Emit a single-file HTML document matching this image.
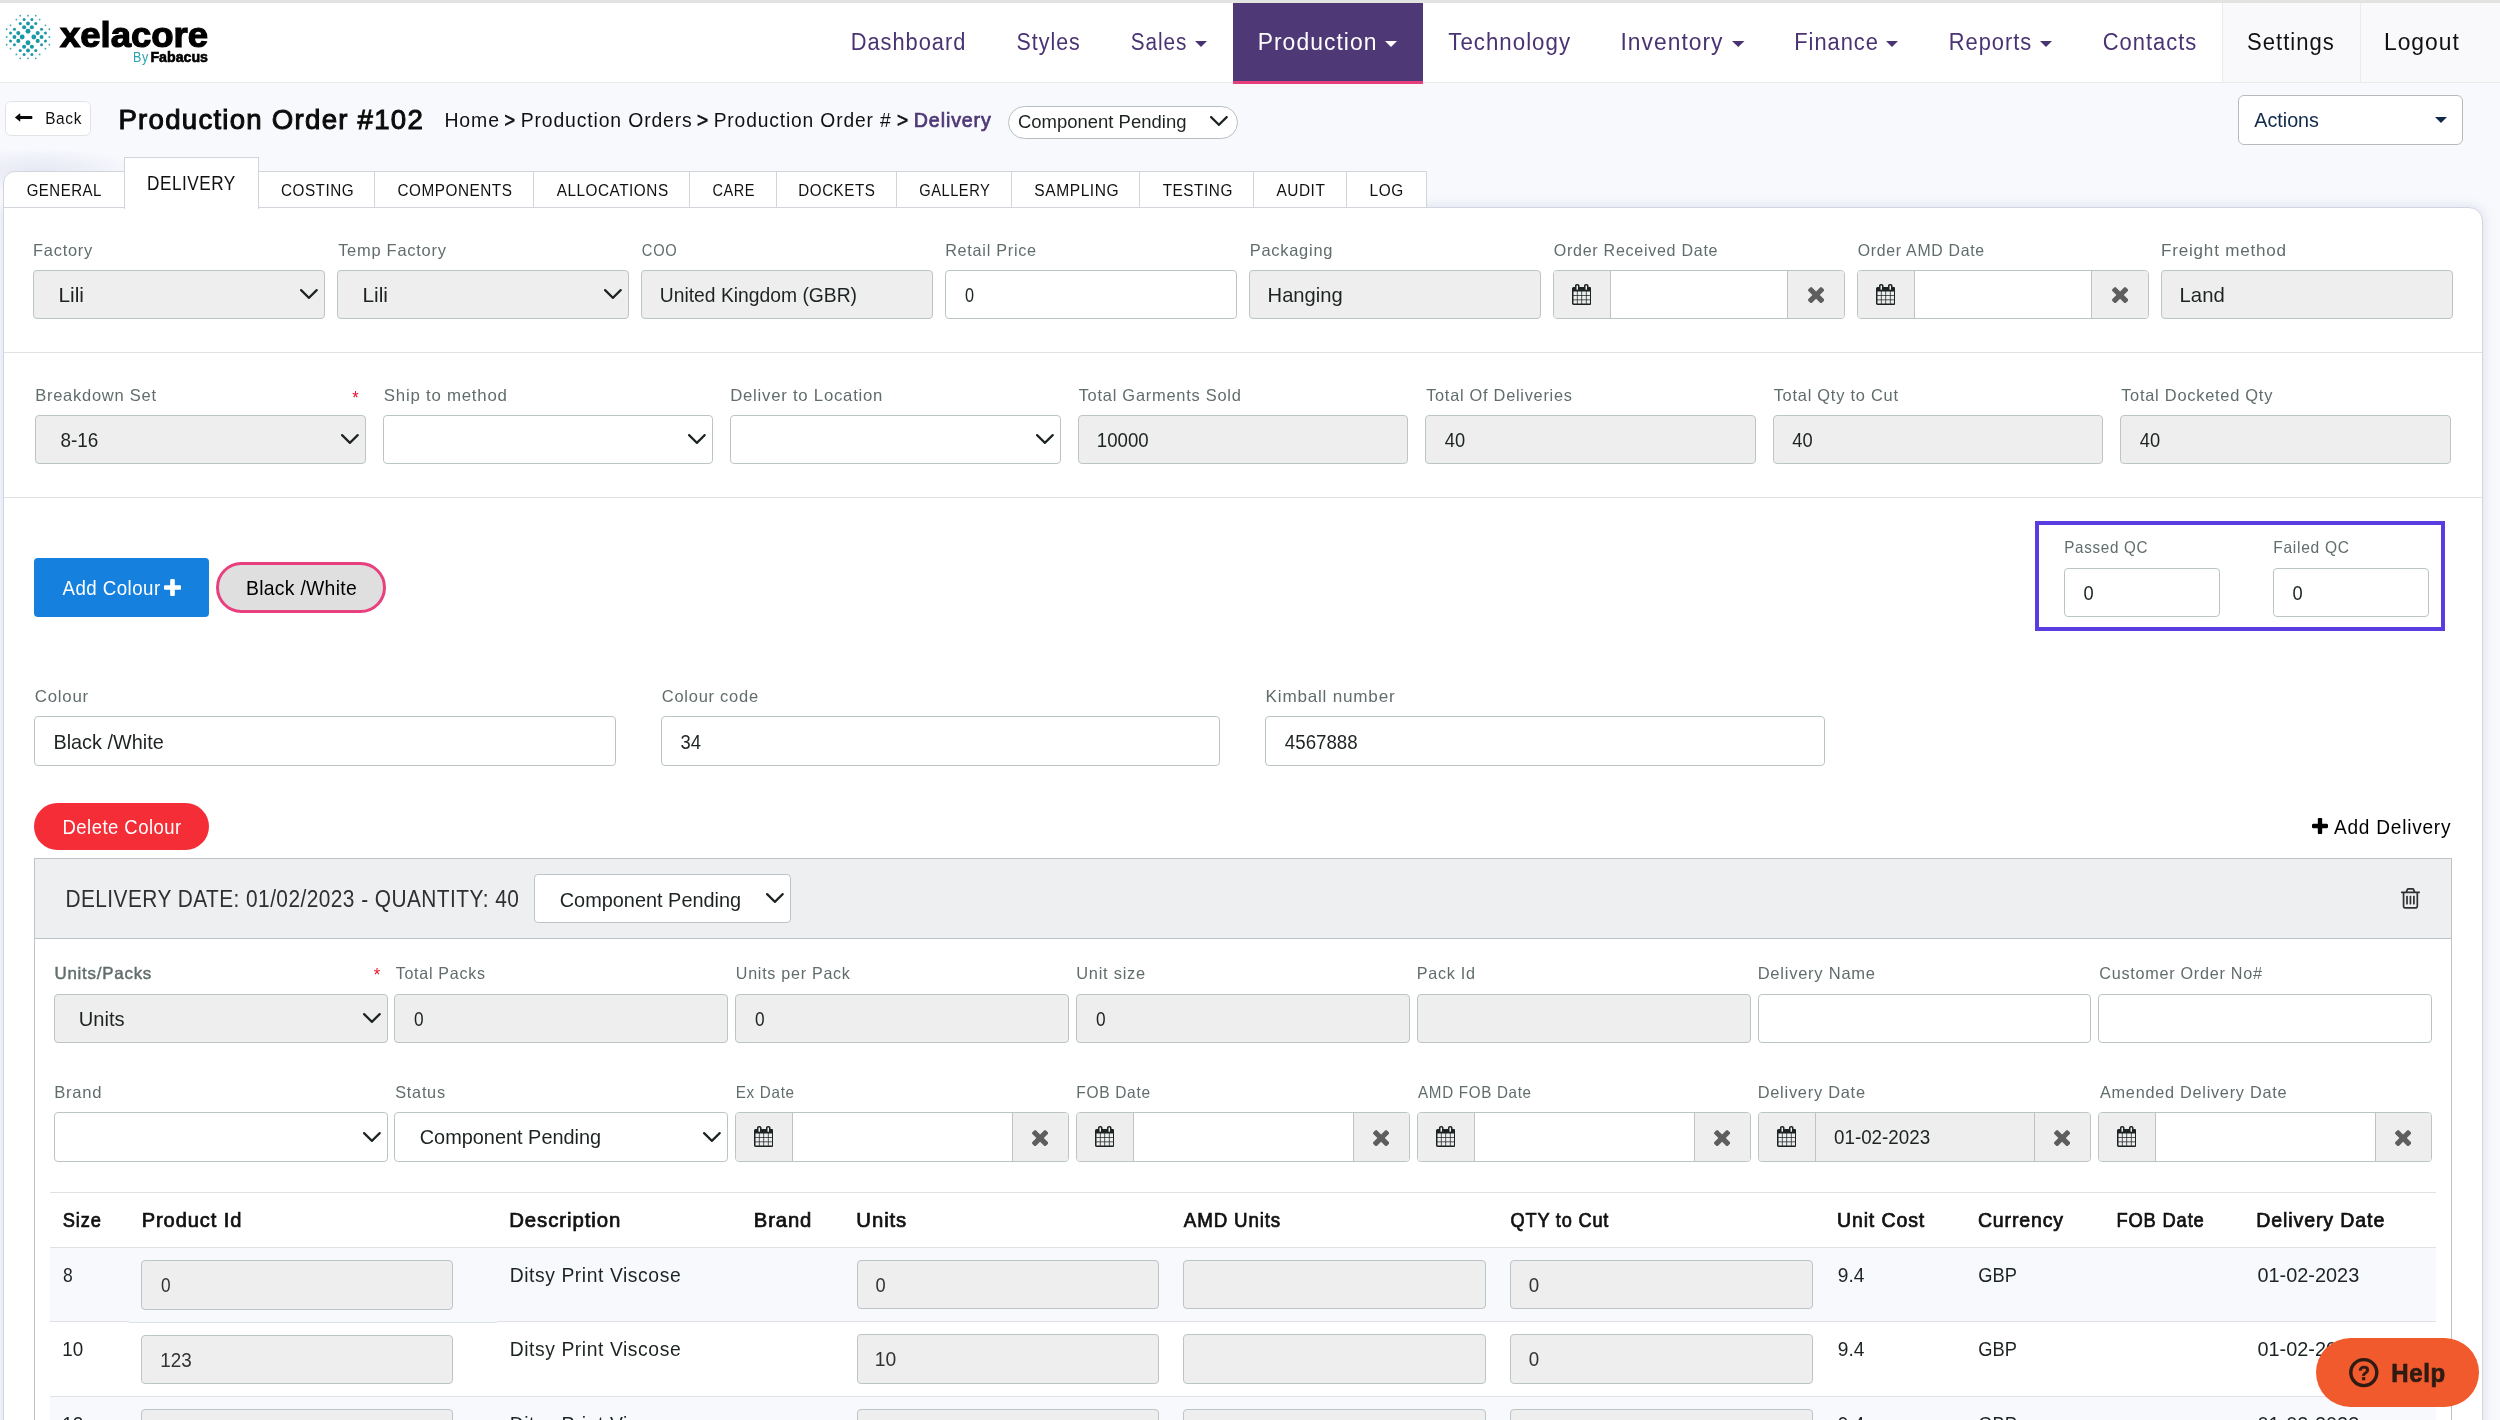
<!DOCTYPE html>
<html lang="en"><head><meta charset="utf-8"><title>Production Order #102 - Delivery</title>
<style>
html,body{margin:0;padding:0}
body{width:2500px;height:1420px;overflow:hidden;position:relative;background:#f8f9fd;font-family:"Liberation Sans",Arial,sans-serif;}
#app{position:absolute;left:0;top:0;width:2500px;height:1420px;will-change:transform}
.b{position:absolute;box-sizing:border-box;display:block}
.t{position:absolute;white-space:nowrap;line-height:1;display:block;transform-origin:0 0}
</style></head><body>
<div id="app">
<div class="b" style="left:0px;top:0px;width:2500px;height:3px;background:#e2e4e2;"></div>
<div class="b" style="left:0px;top:3px;width:2500px;height:79px;background:#fff;"></div>
<div class="b" style="left:0px;top:82px;width:2500px;height:1px;background:#ebebec;"></div>
<div class="b" style="left:2222px;top:3px;width:138px;height:79px;background:#f9f9fb;border-left:1px solid #ebebef;"></div>
<div class="b" style="left:2360px;top:3px;width:140px;height:79px;background:#f9f9fb;border-left:1px solid #ebebef;"></div>
<div class="b" style="left:1233px;top:3px;width:190px;height:81px;background:#4e3876;border-bottom:3px solid #e83e7c;box-sizing:border-box;"></div>
<span class="t" style="left:850px;top:31px;font-size:23.3px;letter-spacing:1.05px;transform:translateX(0.64px) scaleX(0.9374);color:#4a3373;">Dashboard</span>
<span class="t" style="left:1016px;top:31px;font-size:23.3px;letter-spacing:1.05px;transform:translateX(0.58px) scaleX(0.919);color:#4a3373;">Styles</span>
<span class="t" style="left:1130px;top:31px;font-size:23.3px;letter-spacing:1.05px;transform:translateX(0.86px) scaleX(0.8895);color:#4a3373;">Sales</span>
<span class="t" style="left:1257px;top:31px;font-size:23.3px;letter-spacing:1.05px;transform:translateX(0.66px) scaleX(0.9829);color:#fff;">Production</span>
<span class="t" style="left:1448px;top:31px;font-size:23.3px;letter-spacing:1.05px;transform:translateX(0.27px) scaleX(0.9563);color:#4a3373;">Technology</span>
<span class="t" style="left:1620px;top:31px;font-size:23.3px;letter-spacing:1.05px;transform:translateX(0.42px) scaleX(0.9796);color:#4a3373;">Inventory</span>
<span class="t" style="left:1794px;top:31px;font-size:23.3px;letter-spacing:1.05px;transform:translateX(0.24px) scaleX(0.938);color:#4a3373;">Finance</span>
<span class="t" style="left:1948px;top:31px;font-size:23.3px;letter-spacing:1.05px;transform:translateX(0.74px) scaleX(0.9386);color:#4a3373;">Reports</span>
<span class="t" style="left:2102px;top:31px;font-size:23.3px;letter-spacing:1.05px;transform:translateX(0.69px) scaleX(0.942);color:#4a3373;">Contacts</span>
<span class="t" style="left:2247px;top:31px;font-size:23.3px;letter-spacing:1.05px;transform:translateX(0.05px) scaleX(0.947);color:#111;">Settings</span>
<span class="t" style="left:2383px;top:31px;font-size:23.3px;letter-spacing:1.05px;transform:translateX(0.91px) scaleX(0.9794);color:#111;">Logout</span>
<svg class="b" style="left:1195px;top:40.8px" width="12" height="6.0" viewBox="0 0 12 6.0"><path d="M0 0H12L6.0 6.0Z" fill="#4a3373"/></svg>
<svg class="b" style="left:1385px;top:40.8px" width="12" height="6.0" viewBox="0 0 12 6.0"><path d="M0 0H12L6.0 6.0Z" fill="#fff"/></svg>
<svg class="b" style="left:1732px;top:40.8px" width="12.5" height="6.0" viewBox="0 0 12.5 6.0"><path d="M0 0H12.5L6.25 6.0Z" fill="#4a3373"/></svg>
<svg class="b" style="left:1886px;top:40.8px" width="12" height="6.0" viewBox="0 0 12 6.0"><path d="M0 0H12L6.0 6.0Z" fill="#4a3373"/></svg>
<svg class="b" style="left:2040px;top:40.8px" width="12" height="6.0" viewBox="0 0 12 6.0"><path d="M0 0H12L6.0 6.0Z" fill="#4a3373"/></svg>
<svg class="b" style="left:1.8000000000000007px;top:10.799999999999997px" width="52" height="52" viewBox="-26 -26 52 52"><g fill="#1b98a6"><circle cx="0.00" cy="-5.82" r="2.45"/><circle cx="0.00" cy="5.82" r="2.45"/><circle cx="-5.82" cy="0.00" r="2.45"/><circle cx="5.82" cy="0.00" r="2.45"/><circle cx="3.88" cy="-9.70" r="2.05"/><circle cx="3.88" cy="9.70" r="2.05"/><circle cx="-9.70" cy="3.88" r="2.05"/><circle cx="9.70" cy="3.88" r="2.05"/><circle cx="-3.88" cy="-9.70" r="2.05"/><circle cx="-3.88" cy="9.70" r="2.05"/><circle cx="-9.70" cy="-3.88" r="2.05"/><circle cx="9.70" cy="-3.88" r="2.05"/><circle cx="0.00" cy="-13.58" r="2.0"/><circle cx="0.00" cy="13.58" r="2.0"/><circle cx="-13.58" cy="0.00" r="2.0"/><circle cx="13.58" cy="0.00" r="2.0"/><circle cx="7.76" cy="-13.58" r="1.5"/><circle cx="7.76" cy="13.58" r="1.5"/><circle cx="-13.58" cy="7.76" r="1.5"/><circle cx="13.58" cy="7.76" r="1.5"/><circle cx="-7.76" cy="-13.58" r="1.5"/><circle cx="-7.76" cy="13.58" r="1.5"/><circle cx="-13.58" cy="-7.76" r="1.5"/><circle cx="13.58" cy="-7.76" r="1.5"/><circle cx="3.88" cy="-17.46" r="1.5"/><circle cx="3.88" cy="17.46" r="1.5"/><circle cx="-17.46" cy="3.88" r="1.5"/><circle cx="17.46" cy="3.88" r="1.5"/><circle cx="-3.88" cy="-17.46" r="1.5"/><circle cx="-3.88" cy="17.46" r="1.5"/><circle cx="-17.46" cy="-3.88" r="1.5"/><circle cx="17.46" cy="-3.88" r="1.5"/><circle cx="11.64" cy="-17.46" r="0.9" opacity=".85"/><circle cx="11.64" cy="17.46" r="0.9" opacity=".85"/><circle cx="-17.46" cy="11.64" r="0.9" opacity=".85"/><circle cx="17.46" cy="11.64" r="0.9" opacity=".85"/><circle cx="-11.64" cy="-17.46" r="0.9" opacity=".85"/><circle cx="-11.64" cy="17.46" r="0.9" opacity=".85"/><circle cx="-17.46" cy="-11.64" r="0.9" opacity=".85"/><circle cx="17.46" cy="-11.64" r="0.9" opacity=".85"/><circle cx="0.00" cy="-21.34" r="0.95" opacity=".85"/><circle cx="0.00" cy="21.34" r="0.95" opacity=".85"/><circle cx="-21.34" cy="0.00" r="0.95" opacity=".85"/><circle cx="21.34" cy="0.00" r="0.95" opacity=".85"/><circle cx="7.76" cy="-21.34" r="0.9" opacity=".85"/><circle cx="7.76" cy="21.34" r="0.9" opacity=".85"/><circle cx="-21.34" cy="7.76" r="0.9" opacity=".85"/><circle cx="21.34" cy="7.76" r="0.9" opacity=".85"/><circle cx="-7.76" cy="-21.34" r="0.9" opacity=".85"/><circle cx="-7.76" cy="21.34" r="0.9" opacity=".85"/><circle cx="-21.34" cy="-7.76" r="0.9" opacity=".85"/><circle cx="21.34" cy="-7.76" r="0.9" opacity=".85"/></g></svg>
<span class="t" style="left:59px;top:17px;font-size:35.2px;transform:translateX(0.9px) scaleX(1.0374);-webkit-text-stroke:1.2px #000;font-weight:700;">xelacore</span>
<span class="t" style="left:133px;top:50px;font-size:14.6px;letter-spacing:0.66px;transform:translateX(0.03px) scaleX(0.859);color:#2aa3b0;">By</span>
<span class="t" style="left:150px;top:50px;font-size:14.6px;transform:translateX(0.45px) scaleX(0.9713);-webkit-text-stroke:0.6px #000;font-weight:700;">Fabacus</span>
<div class="b" style="left:5px;top:101px;width:86px;height:35px;background:#fff;border:1px solid #e2e3e8;border-radius:6px;"></div>
<svg class="b" style="left:14px;top:112px" width="20" height="11" viewBox="14 112 20 11"><path d="M14.9 117.45L19.6 113.6Q20.3 113.2 20.3 114V115.9H31.5Q32.4 115.9 32.4 116.8V118.1Q32.4 119 31.5 119H20.3V120.9Q20.3 121.7 19.6 121.3Z" fill="#0a0a0a"/></svg>
<span class="t" style="left:45px;top:110px;font-size:17.1px;letter-spacing:0.77px;transform:translateX(0.16px) scaleX(0.8994);color:#111;">Back</span>
<span class="t" style="left:118px;top:106px;font-size:27.6px;letter-spacing:1.24px;transform:translateX(0.44px) scaleX(1.0013);-webkit-text-stroke:0.99px #0b0b0b;color:#0b0b0b;">Production Order #102</span>
<span class="t" style="left:444px;top:110px;font-size:20.3px;letter-spacing:0.91px;transform:translateX(0.44px) scaleX(0.9594);color:#111;">Home</span>
<span class="t" style="left:504px;top:110px;font-size:20.3px;letter-spacing:0.91px;transform:translateX(0.48px) scaleX(0.8881);-webkit-text-stroke:0.73px #111;color:#111;">&gt;</span>
<span class="t" style="left:520px;top:110px;font-size:20.3px;letter-spacing:0.91px;transform:translateX(0.65px) scaleX(0.9551);color:#111;">Production Orders</span>
<span class="t" style="left:696px;top:110px;font-size:20.3px;letter-spacing:0.91px;transform:translateX(0.93px) scaleX(0.9387);-webkit-text-stroke:0.73px #111;color:#111;">&gt;</span>
<span class="t" style="left:713px;top:110px;font-size:20.3px;letter-spacing:0.91px;transform:translateX(0.66px) scaleX(0.9474);color:#111;">Production Order #</span>
<span class="t" style="left:896px;top:110px;font-size:20.3px;letter-spacing:0.91px;transform:translateX(0.93px) scaleX(0.9387);-webkit-text-stroke:0.73px #111;color:#111;">&gt;</span>
<span class="t" style="left:913px;top:110px;font-size:20.3px;letter-spacing:0.91px;transform:translateX(0.79px) scaleX(0.9678);-webkit-text-stroke:0.73px #4e3876;color:#4e3876;">Delivery</span>
<div class="b" style="left:1008px;top:106px;width:230px;height:33px;background:#fff;border:1px solid #b6bfc0;border-radius:17px;"></div>
<span class="t" style="left:1017px;top:113px;font-size:18.9px;transform:translateX(0.94px) scaleX(0.9783);color:#1d2323;">Component Pending</span>
<svg class="b" style="left:1209.9px;top:116.1px" width="17.799999999999955" height="10.0" viewBox="0 0 17.799999999999955 10.0"><path d="M1.10 1.10L8.90 8.79L16.70 1.10" fill="none" stroke="#1d2323" stroke-width="2.2" stroke-linecap="round" stroke-linejoin="miter"/></svg>
<div class="b" style="left:2238px;top:95px;width:225px;height:50px;background:#fff;border:1px solid #b9b9b9;border-radius:6px;"></div>
<span class="t" style="left:2254px;top:110px;font-size:20.3px;transform:translateX(0.2px) scaleX(0.974);color:#10294b;">Actions</span>
<svg class="b" style="left:2435px;top:117px" width="12" height="6" viewBox="0 0 12 6"><path d="M0 0H12L6.0 6Z" fill="#10294b"/></svg>
<div class="b" style="left:-30px;top:140px;width:190px;height:90px;background:radial-gradient(ellipse 100px 24px at 70px 32px,rgba(150,160,205,.2),rgba(150,160,205,0) 100%)"></div>
<div class="b" style="left:3px;top:207px;width:2480px;height:1293px;background:#fff;border:1px solid #d3d5dc;border-radius:0 14px 0 0;box-shadow:0 0 12px rgba(110,120,180,.22);"></div>
<div class="b" style="left:3px;top:171px;width:122px;height:37px;background:#fff;border:1px solid #d2d4db;border-radius:12px 0 0 0;"></div>
<span class="t" style="left:26px;top:182px;font-size:17.4px;letter-spacing:0.6px;transform:translateX(0.65px) scaleX(0.8626);color:#111;">GENERAL</span>
<div class="b" style="left:124px;top:157px;width:135px;height:52px;background:#fff;border:1px solid #d2d4db;border-bottom:none;"></div>
<span class="t" style="left:147px;top:173px;font-size:20.3px;letter-spacing:0.6px;transform:translateX(0.02px) scaleX(0.8474);color:#111;">DELIVERY</span>
<div class="b" style="left:258px;top:171px;width:117px;height:37px;background:#fff;border:1px solid #d2d4db;"></div>
<span class="t" style="left:280px;top:182px;font-size:17.4px;letter-spacing:0.6px;transform:translateX(0.98px) scaleX(0.8767);color:#111;">COSTING</span>
<div class="b" style="left:374px;top:171px;width:160px;height:37px;background:#fff;border:1px solid #d2d4db;"></div>
<span class="t" style="left:397px;top:182px;font-size:17.4px;letter-spacing:0.6px;transform:translateX(0.48px) scaleX(0.8794);color:#111;">COMPONENTS</span>
<div class="b" style="left:533px;top:171px;width:157px;height:37px;background:#fff;border:1px solid #d2d4db;"></div>
<span class="t" style="left:556px;top:182px;font-size:17.4px;letter-spacing:0.6px;transform:translateX(0.75px) scaleX(0.8804);color:#111;">ALLOCATIONS</span>
<div class="b" style="left:689px;top:171px;width:88px;height:37px;background:#fff;border:1px solid #d2d4db;"></div>
<span class="t" style="left:712px;top:182px;font-size:17.4px;letter-spacing:0.6px;transform:translateX(0.52px) scaleX(0.8345);color:#111;">CARE</span>
<div class="b" style="left:776px;top:171px;width:121px;height:37px;background:#fff;border:1px solid #d2d4db;"></div>
<span class="t" style="left:798px;top:182px;font-size:17.4px;letter-spacing:0.6px;transform:translateX(0.3px) scaleX(0.8733);color:#111;">DOCKETS</span>
<div class="b" style="left:896px;top:171px;width:116px;height:37px;background:#fff;border:1px solid #d2d4db;"></div>
<span class="t" style="left:919px;top:182px;font-size:17.4px;letter-spacing:0.6px;transform:translateX(0.26px) scaleX(0.8443);color:#111;">GALLERY</span>
<div class="b" style="left:1011px;top:171px;width:129px;height:37px;background:#fff;border:1px solid #d2d4db;"></div>
<span class="t" style="left:1034px;top:182px;font-size:17.4px;letter-spacing:0.6px;transform:translateX(0.33px) scaleX(0.8959);color:#111;">SAMPLING</span>
<div class="b" style="left:1139px;top:171px;width:115px;height:37px;background:#fff;border:1px solid #d2d4db;"></div>
<span class="t" style="left:1162px;top:182px;font-size:17.4px;letter-spacing:0.6px;transform:translateX(0.67px) scaleX(0.8825);color:#111;">TESTING</span>
<div class="b" style="left:1253px;top:171px;width:94px;height:37px;background:#fff;border:1px solid #d2d4db;"></div>
<span class="t" style="left:1276px;top:182px;font-size:17.4px;letter-spacing:0.6px;transform:translateX(0.5px) scaleX(0.8853);color:#111;">AUDIT</span>
<div class="b" style="left:1346px;top:171px;width:81px;height:37px;background:#fff;border:1px solid #d2d4db;"></div>
<span class="t" style="left:1369px;top:182px;font-size:17.4px;letter-spacing:0.6px;transform:translateX(0.53px) scaleX(0.8857);color:#111;">LOG</span>
<span class="t" style="left:33px;top:243px;font-size:16.92px;letter-spacing:0.76px;transform:translateX(0.07px) scaleX(0.9709);color:#616d6c;">Factory</span>
<span class="t" style="left:338px;top:243px;font-size:16.92px;letter-spacing:0.76px;transform:translateX(0.14px) scaleX(0.9728);color:#616d6c;">Temp Factory</span>
<span class="t" style="left:641px;top:243px;font-size:16.92px;letter-spacing:0.76px;transform:translateX(0.85px) scaleX(0.8696);color:#616d6c;">COO</span>
<span class="t" style="left:945px;top:243px;font-size:16.92px;letter-spacing:0.76px;transform:translateX(0.18px) scaleX(0.9587);color:#616d6c;">Retail Price</span>
<span class="t" style="left:1249px;top:243px;font-size:16.92px;letter-spacing:0.76px;transform:translateX(0.66px) scaleX(0.9736);color:#616d6c;">Packaging</span>
<span class="t" style="left:1553px;top:243px;font-size:16.92px;letter-spacing:0.76px;transform:translateX(0.79px) scaleX(0.9492);color:#616d6c;">Order Received Date</span>
<span class="t" style="left:1857px;top:243px;font-size:16.92px;letter-spacing:0.76px;transform:translateX(0.8px) scaleX(0.9371);color:#616d6c;">Order AMD Date</span>
<span class="t" style="left:2161px;top:243px;font-size:16.92px;letter-spacing:0.76px;transform:translateX(0.11px) scaleX(1.0102);color:#616d6c;">Freight method</span>
<div class="b" style="left:33px;top:270px;width:292px;height:49px;background:#eeeeee;border:1px solid #bcc5c6;border-radius:4px;"></div>
<div class="b" style="left:337px;top:270px;width:292px;height:49px;background:#eeeeee;border:1px solid #bcc5c6;border-radius:4px;"></div>
<div class="b" style="left:641px;top:270px;width:292px;height:49px;background:#eeeeee;border:1px solid #bcc5c6;border-radius:4px;"></div>
<div class="b" style="left:945px;top:270px;width:292px;height:49px;background:#fff;border:1px solid #bcc5c6;border-radius:4px;"></div>
<div class="b" style="left:1249px;top:270px;width:292px;height:49px;background:#eeeeee;border:1px solid #bcc5c6;border-radius:4px;"></div>
<div class="b" style="left:1553px;top:270px;width:292px;height:49px;background:#fff;border:1px solid #bcc5c6;border-radius:4px;"></div>
<div class="b" style="left:1554px;top:271px;width:56.5px;height:47px;background:#eeeeee;border-right:1px solid #bcc5c6;border-radius:3px 0 0 3px;"></div>
<div class="b" style="left:1787px;top:271px;width:57px;height:47px;background:#eeeeee;border-left:1px solid #bcc5c6;border-radius:0 3px 3px 0;"></div>
<svg class="b" style="left:1571.6px;top:284.2px" width="19.5" height="21" viewBox="0 -1536 1664 1792" preserveAspectRatio="none"><path transform="scale(1,-1)" fill="#1d2323" d="M128 -128h288v288h-288v-288zM480 -128h320v288h-320v-288zM128 224h288v320h-288v-320zM480 224h320v320h-320v-320zM128 608h288v288h-288v-288zM864 -128h320v288h-320v-288zM480 608h320v288h-320v-288zM1248 -128h288v288h-288v-288zM864 224h320v320h-320v-320zM512 1088v288q0 13 -9.5 22.5t-22.5 9.5h-64q-13 0 -22.5 -9.5t-9.5 -22.5v-288q0 -13 9.5 -22.5t22.5 -9.5h64q13 0 22.5 9.5t9.5 22.5zM1248 224h288v320h-288v-320zM864 608h320v288h-320v-288zM1248 608h288v288h-288v-288zM1280 1088v288q0 13 -9.5 22.5t-22.5 9.5h-64q-13 0 -22.5 -9.5t-9.5 -22.5v-288q0 -13 9.5 -22.5t22.5 -9.5h64q13 0 22.5 9.5t9.5 22.5zM1664 1152v-1280q0 -52 -38 -90t-90 -38h-1408q-52 0 -90 38t-38 90v1280q0 52 38 90t90 38h128v96q0 66 47 113t113 47h64q66 0 113 -47t47 -113v-96h384v96q0 66 47 113t113 47h64q66 0 113 -47t47 -113v-96h128q52 0 90 -38t38 -90z"/></svg>
<svg class="b" style="left:1807.9px;top:287.2px" width="16.2" height="16.2" viewBox="110 -1170 1188 1188" preserveAspectRatio="none"><path transform="scale(1,-1)" fill="#5e5e5e" d="M1298 214q0 -40 -28 -68l-136 -136q-28 -28 -68 -28t-68 28l-294 294l-294 -294q-28 -28 -68 -28t-68 28l-136 136q-28 28 -28 68t28 68l294 294l-294 294q-28 28 -28 68t28 68l136 136q28 28 68 28t68 -28l294 -294l294 294q28 28 68 28t68 -28l136 -136q28 -28 28 -68t-28 -68l-294 -294l294 -294q28 -28 28 -68z"/></svg>
<div class="b" style="left:1857px;top:270px;width:292px;height:49px;background:#fff;border:1px solid #bcc5c6;border-radius:4px;"></div>
<div class="b" style="left:1858px;top:271px;width:56.5px;height:47px;background:#eeeeee;border-right:1px solid #bcc5c6;border-radius:3px 0 0 3px;"></div>
<div class="b" style="left:2091px;top:271px;width:57px;height:47px;background:#eeeeee;border-left:1px solid #bcc5c6;border-radius:0 3px 3px 0;"></div>
<svg class="b" style="left:1875.6px;top:284.2px" width="19.5" height="21" viewBox="0 -1536 1664 1792" preserveAspectRatio="none"><path transform="scale(1,-1)" fill="#1d2323" d="M128 -128h288v288h-288v-288zM480 -128h320v288h-320v-288zM128 224h288v320h-288v-320zM480 224h320v320h-320v-320zM128 608h288v288h-288v-288zM864 -128h320v288h-320v-288zM480 608h320v288h-320v-288zM1248 -128h288v288h-288v-288zM864 224h320v320h-320v-320zM512 1088v288q0 13 -9.5 22.5t-22.5 9.5h-64q-13 0 -22.5 -9.5t-9.5 -22.5v-288q0 -13 9.5 -22.5t22.5 -9.5h64q13 0 22.5 9.5t9.5 22.5zM1248 224h288v320h-288v-320zM864 608h320v288h-320v-288zM1248 608h288v288h-288v-288zM1280 1088v288q0 13 -9.5 22.5t-22.5 9.5h-64q-13 0 -22.5 -9.5t-9.5 -22.5v-288q0 -13 9.5 -22.5t22.5 -9.5h64q13 0 22.5 9.5t9.5 22.5zM1664 1152v-1280q0 -52 -38 -90t-90 -38h-1408q-52 0 -90 38t-38 90v1280q0 52 38 90t90 38h128v96q0 66 47 113t113 47h64q66 0 113 -47t47 -113v-96h384v96q0 66 47 113t113 47h64q66 0 113 -47t47 -113v-96h128q52 0 90 -38t38 -90z"/></svg>
<svg class="b" style="left:2111.9px;top:287.2px" width="16.2" height="16.2" viewBox="110 -1170 1188 1188" preserveAspectRatio="none"><path transform="scale(1,-1)" fill="#5e5e5e" d="M1298 214q0 -40 -28 -68l-136 -136q-28 -28 -68 -28t-68 28l-294 294l-294 -294q-28 -28 -68 -28t-68 28l-136 136q-28 28 -28 68t28 68l294 294l-294 294q-28 28 -28 68t28 68l136 136q28 28 68 28t68 -28l294 -294l294 294q28 28 68 28t68 -28l136 -136q28 -28 28 -68t-28 -68l-294 -294l294 -294q28 -28 28 -68z"/></svg>
<div class="b" style="left:2161px;top:270px;width:292px;height:49px;background:#eeeeee;border:1px solid #bcc5c6;border-radius:4px;"></div>
<svg class="b" style="left:300px;top:289.4px" width="17.80000000000001" height="10.100000000000023" viewBox="0 0 17.80000000000001 10.100000000000023"><path d="M1.10 1.10L8.90 8.89L16.70 1.10" fill="none" stroke="#1d2323" stroke-width="2.2" stroke-linecap="round" stroke-linejoin="miter"/></svg>
<svg class="b" style="left:604px;top:289.4px" width="17.799999999999955" height="10.100000000000023" viewBox="0 0 17.799999999999955 10.100000000000023"><path d="M1.10 1.10L8.90 8.89L16.70 1.10" fill="none" stroke="#1d2323" stroke-width="2.2" stroke-linecap="round" stroke-linejoin="miter"/></svg>
<span class="t" style="left:58px;top:285px;font-size:20.3px;transform:translateX(0.43px) scaleX(1.0305);color:#1d2323;">Lili</span>
<span class="t" style="left:362px;top:285px;font-size:20.3px;transform:translateX(0.43px) scaleX(1.0305);color:#1d2323;">Lili</span>
<span class="t" style="left:659px;top:285px;font-size:20.3px;transform:translateX(0.77px) scaleX(0.9512);color:#1d2323;">United Kingdom (GBR)</span>
<span class="t" style="left:965px;top:285px;font-size:20.3px;transform:translateX(0.1px) scaleX(0.8);color:#1d2323;">0</span>
<span class="t" style="left:1267px;top:285px;font-size:20.3px;transform:translateX(0.58px) scaleX(0.9946);color:#1d2323;">Hanging</span>
<span class="t" style="left:2179px;top:285px;font-size:20.3px;transform:translateX(0.57px) scaleX(1.0014);color:#1d2323;">Land</span>
<div class="b" style="left:4px;top:352px;width:2478px;height:1px;background:#dfe2e5;"></div>
<span class="t" style="left:35px;top:388px;font-size:16.92px;letter-spacing:0.76px;transform:translateX(0.16px) scaleX(0.9762);color:#616d6c;">Breakdown Set</span>
<span class="t" style="left:383px;top:388px;font-size:16.92px;letter-spacing:0.76px;transform:translateX(0.75px) scaleX(0.9967);color:#616d6c;">Ship to method</span>
<span class="t" style="left:730px;top:388px;font-size:16.92px;letter-spacing:0.76px;transform:translateX(0.14px) scaleX(0.9907);color:#616d6c;">Deliver to Location</span>
<span class="t" style="left:1078px;top:388px;font-size:16.92px;letter-spacing:0.76px;transform:translateX(0.64px) scaleX(0.9725);color:#616d6c;">Total Garments Sold</span>
<span class="t" style="left:1426px;top:388px;font-size:16.92px;letter-spacing:0.76px;transform:translateX(0.14px) scaleX(0.9666);color:#616d6c;">Total Of Deliveries</span>
<span class="t" style="left:1773px;top:388px;font-size:16.92px;letter-spacing:0.76px;transform:translateX(0.64px) scaleX(0.9721);color:#616d6c;">Total Qty to Cut</span>
<span class="t" style="left:2121px;top:388px;font-size:16.92px;letter-spacing:0.76px;transform:translateX(0.14px) scaleX(0.9709);color:#616d6c;">Total Docketed Qty</span>
<span class="t" style="left:352px;top:389px;font-size:18px;letter-spacing:0.81px;transform:translateX(0.27px) scaleX(0.9231);color:#e8112d;">*</span>
<div class="b" style="left:35px;top:415px;width:331px;height:49px;background:#eeeeee;border:1px solid #bcc5c6;border-radius:4px;"></div>
<svg class="b" style="left:341px;top:434.4px" width="17.80000000000001" height="10.100000000000023" viewBox="0 0 17.80000000000001 10.100000000000023"><path d="M1.10 1.10L8.90 8.89L16.70 1.10" fill="none" stroke="#1d2323" stroke-width="2.2" stroke-linecap="round" stroke-linejoin="miter"/></svg>
<div class="b" style="left:383px;top:415px;width:330px;height:49px;background:#fff;border:1px solid #bcc5c6;border-radius:4px;"></div>
<svg class="b" style="left:688px;top:434.4px" width="17.799999999999955" height="10.100000000000023" viewBox="0 0 17.799999999999955 10.100000000000023"><path d="M1.10 1.10L8.90 8.89L16.70 1.10" fill="none" stroke="#1d2323" stroke-width="2.2" stroke-linecap="round" stroke-linejoin="miter"/></svg>
<div class="b" style="left:730px;top:415px;width:331px;height:49px;background:#fff;border:1px solid #bcc5c6;border-radius:4px;"></div>
<svg class="b" style="left:1036px;top:434.4px" width="17.799999999999955" height="10.100000000000023" viewBox="0 0 17.799999999999955 10.100000000000023"><path d="M1.10 1.10L8.90 8.89L16.70 1.10" fill="none" stroke="#1d2323" stroke-width="2.2" stroke-linecap="round" stroke-linejoin="miter"/></svg>
<div class="b" style="left:1078px;top:415px;width:330px;height:49px;background:#eeeeee;border:1px solid #bcc5c6;border-radius:4px;"></div>
<div class="b" style="left:1425px;top:415px;width:331px;height:49px;background:#eeeeee;border:1px solid #bcc5c6;border-radius:4px;"></div>
<div class="b" style="left:1773px;top:415px;width:330px;height:49px;background:#eeeeee;border:1px solid #bcc5c6;border-radius:4px;"></div>
<div class="b" style="left:2120px;top:415px;width:331px;height:49px;background:#eeeeee;border:1px solid #bcc5c6;border-radius:4px;"></div>
<span class="t" style="left:60px;top:430px;font-size:20.3px;transform:translateX(0.38px) scaleX(0.9317);color:#1d2323;">8-16</span>
<span class="t" style="left:1096px;top:430px;font-size:20.3px;transform:translateX(0.82px) scaleX(0.9196);color:#1d2323;">10000</span>
<span class="t" style="left:1444px;top:430px;font-size:20.3px;transform:translateX(0.86px) scaleX(0.9013);color:#1d2323;">40</span>
<span class="t" style="left:1792px;top:430px;font-size:20.3px;transform:translateX(0.36px) scaleX(0.9013);color:#1d2323;">40</span>
<span class="t" style="left:2139px;top:430px;font-size:20.3px;transform:translateX(0.86px) scaleX(0.9013);color:#1d2323;">40</span>
<div class="b" style="left:4px;top:497px;width:2478px;height:1px;background:#dfe2e5;"></div>
<div class="b" style="left:2035px;top:521px;width:410px;height:110px;border:4px solid #5b3ce0;"></div>
<span class="t" style="left:2064px;top:540px;font-size:16.92px;letter-spacing:0.76px;transform:translateX(0.26px) scaleX(0.8993);color:#616d6c;">Passed QC</span>
<span class="t" style="left:2273px;top:540px;font-size:16.92px;letter-spacing:0.76px;transform:translateX(0.23px) scaleX(0.9218);color:#616d6c;">Failed QC</span>
<div class="b" style="left:2064px;top:568px;width:156px;height:49px;background:#fff;border:1px solid #bcc5c6;border-radius:4px;"></div>
<div class="b" style="left:2273px;top:568px;width:156px;height:49px;background:#fff;border:1px solid #bcc5c6;border-radius:4px;"></div>
<span class="t" style="left:2083px;top:583px;font-size:20.3px;transform:translateX(0.52px) scaleX(0.9026);color:#1d2323;">0</span>
<span class="t" style="left:2292px;top:583px;font-size:20.3px;transform:translateX(0.52px) scaleX(0.9026);color:#1d2323;">0</span>
<div class="b" style="left:34px;top:558px;width:175px;height:59px;background:#1580de;border-radius:4px;"></div>
<span class="t" style="left:62px;top:578px;font-size:20.3px;letter-spacing:0.5px;transform:translateX(0.5px) scaleX(0.9217);color:#fff;">Add Colour</span>
<svg class="b" style="left:164px;top:578.5px" width="17" height="17" viewBox="0 -1408 1408 1408" preserveAspectRatio="none"><path transform="scale(1,-1)" fill="#fff" d="M1408 800v-192q0 -40 -28 -68t-68 -28h-416v-416q0 -40 -28 -68t-68 -28h-192q-40 0 -68 28t-28 68v416h-416q-40 0 -68 28t-28 68v192q0 40 28 68t68 28h416v416q0 40 28 68t68 28h192q40 0 68 -28t28 -68v-416h416q40 0 68 -28t28 -68z"/></svg>
<div class="b" style="left:216px;top:562px;width:170px;height:51px;background:#dfdfdf;border:3px solid #e8407f;border-radius:26px;"></div>
<span class="t" style="left:245px;top:578px;font-size:20.3px;letter-spacing:0.3px;transform:translateX(0.95px) scaleX(0.9544);">Black /White</span>
<span class="t" style="left:34px;top:689px;font-size:16.92px;letter-spacing:0.76px;transform:translateX(0.75px) scaleX(0.9975);color:#616d6c;">Colour</span>
<span class="t" style="left:661px;top:689px;font-size:16.92px;letter-spacing:0.76px;transform:translateX(0.77px) scaleX(0.9751);color:#616d6c;">Colour code</span>
<span class="t" style="left:1265px;top:689px;font-size:16.92px;letter-spacing:0.76px;transform:translateX(0.61px) scaleX(1.0136);color:#616d6c;">Kimball number</span>
<div class="b" style="left:34px;top:716px;width:582px;height:50px;background:#fff;border:1px solid #bcc5c6;border-radius:4px;"></div>
<div class="b" style="left:661px;top:716px;width:559px;height:50px;background:#fff;border:1px solid #bcc5c6;border-radius:4px;"></div>
<div class="b" style="left:1265px;top:716px;width:560px;height:50px;background:#fff;border:1px solid #bcc5c6;border-radius:4px;"></div>
<span class="t" style="left:53px;top:732px;font-size:20.3px;transform:translateX(0.41px) scaleX(0.9784);color:#1d2323;">Black /White</span>
<span class="t" style="left:680px;top:732px;font-size:20.3px;transform:translateX(0.52px) scaleX(0.9066);color:#1d2323;">34</span>
<span class="t" style="left:1284px;top:732px;font-size:20.3px;transform:translateX(0.85px) scaleX(0.9222);color:#1d2323;">4567888</span>
<div class="b" style="left:34px;top:803px;width:175px;height:47px;background:#f52d37;border-radius:24px;"></div>
<span class="t" style="left:62px;top:817px;font-size:20.3px;letter-spacing:0.5px;transform:translateX(0.52px) scaleX(0.9125);color:#fff;">Delete Colour</span>
<svg class="b" style="left:2312px;top:818px" width="16" height="16" viewBox="0 -1408 1408 1408" preserveAspectRatio="none"><path transform="scale(1,-1)" fill="#000" d="M1408 800v-192q0 -40 -28 -68t-68 -28h-416v-416q0 -40 -28 -68t-68 -28h-192q-40 0 -68 28t-28 68v416h-416q-40 0 -68 28t-28 68v192q0 40 28 68t68 28h416v416q0 40 28 68t68 28h192q40 0 68 -28t28 -68v-416h416q40 0 68 -28t28 -68z"/></svg>
<span class="t" style="left:2334px;top:817px;font-size:20.3px;letter-spacing:0.8px;transform:scaleX(0.9407);">Add Delivery</span>
<div class="b" style="left:34px;top:858px;width:2418px;height:642px;background:#fff;border:1px solid #bcc4c6;"></div>
<div class="b" style="left:35px;top:859px;width:2416px;height:80px;background:#eeeff1;border-bottom:1px solid #bcc4c6;"></div>
<span class="t" style="left:65px;top:888px;font-size:23.3px;letter-spacing:0.5px;transform:translateX(0.42px) scaleX(0.8954);color:#2f2f2f;">DELIVERY DATE: 01/02/2023 - QUANTITY: 40</span>
<div class="b" style="left:534px;top:874px;width:257px;height:49px;background:#fff;border:1px solid #bcc5c6;border-radius:4px;"></div>
<span class="t" style="left:559px;top:890px;font-size:20.3px;transform:translateX(0.72px) scaleX(0.981);color:#1d2323;">Component Pending</span>
<svg class="b" style="left:766px;top:893.4px" width="17.799999999999955" height="10.100000000000023" viewBox="0 0 17.799999999999955 10.100000000000023"><path d="M1.10 1.10L8.90 8.89L16.70 1.10" fill="none" stroke="#1d2323" stroke-width="2.2" stroke-linecap="round" stroke-linejoin="miter"/></svg>
<svg class="b" style="left:2401.1px;top:887.9px" width="18.9" height="20.8" viewBox="0 -1408 1408 1536" preserveAspectRatio="none"><path transform="scale(1,-1)" fill="#303030" d="M512 800v-576q0 -14 -9 -23t-23 -9h-64q-14 0 -23 9t-9 23v576q0 14 9 23t23 9h64q14 0 23 -9t9 -23zM768 800v-576q0 -14 -9 -23t-23 -9h-64q-14 0 -23 9t-9 23v576q0 14 9 23t23 9h64q14 0 23 -9t9 -23zM1024 800v-576q0 -14 -9 -23t-23 -9h-64q-14 0 -23 9t-9 23v576q0 14 9 23t23 9h64q14 0 23 -9t9 -23zM1152 76v948h-896v-948q0 -22 7 -40.5t14.5 -27t10.5 -8.5h832q3 0 10.5 8.5t14.5 27t7 40.5zM480 1152h448l-48 117q-7 9 -17 11h-317q-10 -2 -17 -11zM1408 1120v-64q0 -14 -9 -23t-23 -9h-96v-948q0 -83 -47 -143.5t-113 -60.5h-832q-66 0 -113 58.5t-47 141.5v952h-96q-14 0 -23 9t-9 23v64q0 14 9 23t23 9h309l70 167q15 37 54 63t79 26h320q40 0 79 -26t54 -63l70 -167h309q14 0 23 -9t9 -23z"/></svg>
<span class="t" style="left:54px;top:966px;font-size:16.92px;letter-spacing:0.76px;transform:translateX(0.48px) scaleX(0.9996);-webkit-text-stroke:0.45px #616d6c;color:#616d6c;">Units/Packs</span>
<span class="t" style="left:395px;top:966px;font-size:16.92px;letter-spacing:0.76px;transform:translateX(0.64px) scaleX(0.95);color:#616d6c;">Total Packs</span>
<span class="t" style="left:735px;top:966px;font-size:16.92px;letter-spacing:0.76px;transform:translateX(0.81px) scaleX(0.9521);color:#616d6c;">Units per Pack</span>
<span class="t" style="left:1076px;top:966px;font-size:16.92px;letter-spacing:0.76px;transform:translateX(0.29px) scaleX(0.9703);color:#616d6c;">Unit size</span>
<span class="t" style="left:1416px;top:966px;font-size:16.92px;letter-spacing:0.76px;transform:translateX(0.69px) scaleX(0.956);color:#616d6c;">Pack Id</span>
<span class="t" style="left:1757px;top:966px;font-size:16.92px;letter-spacing:0.76px;transform:translateX(0.65px) scaleX(0.9786);color:#616d6c;">Delivery Name</span>
<span class="t" style="left:2099px;top:966px;font-size:16.92px;letter-spacing:0.76px;transform:translateX(0.28px) scaleX(0.9576);color:#616d6c;">Customer Order No#</span>
<span class="t" style="left:373px;top:966px;font-size:18px;letter-spacing:0.81px;transform:translateX(0.77px) scaleX(0.9231);color:#e8112d;">*</span>
<div class="b" style="left:54px;top:994px;width:334px;height:49px;background:#eeeeee;border:1px solid #bcc5c6;border-radius:4px;"></div>
<div class="b" style="left:394px;top:994px;width:334px;height:49px;background:#eeeeee;border:1px solid #bcc5c6;border-radius:4px;"></div>
<div class="b" style="left:735px;top:994px;width:334px;height:49px;background:#eeeeee;border:1px solid #bcc5c6;border-radius:4px;"></div>
<div class="b" style="left:1076px;top:994px;width:334px;height:49px;background:#eeeeee;border:1px solid #bcc5c6;border-radius:4px;"></div>
<div class="b" style="left:1417px;top:994px;width:334px;height:49px;background:#eeeeee;border:1px solid #bcc5c6;border-radius:4px;"></div>
<div class="b" style="left:1758px;top:994px;width:333px;height:49px;background:#fff;border:1px solid #bcc5c6;border-radius:4px;"></div>
<div class="b" style="left:2098px;top:994px;width:334px;height:49px;background:#fff;border:1px solid #bcc5c6;border-radius:4px;"></div>
<svg class="b" style="left:363px;top:1013.4px" width="17.80000000000001" height="10.100000000000023" viewBox="0 0 17.80000000000001 10.100000000000023"><path d="M1.10 1.10L8.90 8.89L16.70 1.10" fill="none" stroke="#1d2323" stroke-width="2.2" stroke-linecap="round" stroke-linejoin="miter"/></svg>
<span class="t" style="left:78px;top:1009px;font-size:20.3px;transform:translateX(0.71px) scaleX(0.9933);color:#1d2323;">Units</span>
<span class="t" style="left:414px;top:1009px;font-size:20.3px;transform:translateX(0.06px) scaleX(0.8513);color:#1d2323;">0</span>
<span class="t" style="left:755px;top:1009px;font-size:20.3px;transform:translateX(0.06px) scaleX(0.8513);color:#1d2323;">0</span>
<span class="t" style="left:1096px;top:1009px;font-size:20.3px;transform:translateX(0.06px) scaleX(0.8513);color:#1d2323;">0</span>
<span class="t" style="left:54px;top:1085px;font-size:16.92px;letter-spacing:0.76px;transform:translateX(0.15px) scaleX(0.983);color:#616d6c;">Brand</span>
<span class="t" style="left:395px;top:1085px;font-size:16.92px;letter-spacing:0.76px;transform:translateX(0.28px) scaleX(0.9617);color:#616d6c;">Status</span>
<span class="t" style="left:735px;top:1085px;font-size:16.92px;letter-spacing:0.76px;transform:translateX(0.76px) scaleX(0.901);color:#616d6c;">Ex Date</span>
<span class="t" style="left:1076px;top:1085px;font-size:16.92px;letter-spacing:0.76px;transform:translateX(0.24px) scaleX(0.9171);color:#616d6c;">FOB Date</span>
<span class="t" style="left:1418px;top:1085px;font-size:16.92px;letter-spacing:0.76px;transform:scaleX(0.8984);color:#616d6c;">AMD FOB Date</span>
<span class="t" style="left:1757px;top:1085px;font-size:16.92px;letter-spacing:0.76px;transform:translateX(0.66px) scaleX(0.9711);color:#616d6c;">Delivery Date</span>
<span class="t" style="left:2100px;top:1085px;font-size:16.92px;letter-spacing:0.76px;transform:scaleX(0.9626);color:#616d6c;">Amended Delivery Date</span>
<div class="b" style="left:54px;top:1112px;width:334px;height:50px;background:#fff;border:1px solid #bcc5c6;border-radius:4px;"></div>
<svg class="b" style="left:363px;top:1131.9px" width="17.80000000000001" height="10.099999999999909" viewBox="0 0 17.80000000000001 10.099999999999909"><path d="M1.10 1.10L8.90 8.89L16.70 1.10" fill="none" stroke="#1d2323" stroke-width="2.2" stroke-linecap="round" stroke-linejoin="miter"/></svg>
<div class="b" style="left:394px;top:1112px;width:334px;height:50px;background:#fff;border:1px solid #bcc5c6;border-radius:4px;"></div>
<svg class="b" style="left:703px;top:1131.9px" width="17.799999999999955" height="10.099999999999909" viewBox="0 0 17.799999999999955 10.099999999999909"><path d="M1.10 1.10L8.90 8.89L16.70 1.10" fill="none" stroke="#1d2323" stroke-width="2.2" stroke-linecap="round" stroke-linejoin="miter"/></svg>
<div class="b" style="left:735px;top:1112px;width:334px;height:50px;background:#fff;border:1px solid #bcc5c6;border-radius:4px;"></div>
<div class="b" style="left:736px;top:1113px;width:56.5px;height:48px;background:#eeeeee;border-right:1px solid #bcc5c6;border-radius:3px 0 0 3px;"></div>
<div class="b" style="left:1012px;top:1113px;width:56px;height:48px;background:#eeeeee;border-left:1px solid #bcc5c6;border-radius:0 3px 3px 0;"></div>
<svg class="b" style="left:753.6px;top:1125.7px" width="19.5" height="21" viewBox="0 -1536 1664 1792" preserveAspectRatio="none"><path transform="scale(1,-1)" fill="#1d2323" d="M128 -128h288v288h-288v-288zM480 -128h320v288h-320v-288zM128 224h288v320h-288v-320zM480 224h320v320h-320v-320zM128 608h288v288h-288v-288zM864 -128h320v288h-320v-288zM480 608h320v288h-320v-288zM1248 -128h288v288h-288v-288zM864 224h320v320h-320v-320zM512 1088v288q0 13 -9.5 22.5t-22.5 9.5h-64q-13 0 -22.5 -9.5t-9.5 -22.5v-288q0 -13 9.5 -22.5t22.5 -9.5h64q13 0 22.5 9.5t9.5 22.5zM1248 224h288v320h-288v-320zM864 608h320v288h-320v-288zM1248 608h288v288h-288v-288zM1280 1088v288q0 13 -9.5 22.5t-22.5 9.5h-64q-13 0 -22.5 -9.5t-9.5 -22.5v-288q0 -13 9.5 -22.5t22.5 -9.5h64q13 0 22.5 9.5t9.5 22.5zM1664 1152v-1280q0 -52 -38 -90t-90 -38h-1408q-52 0 -90 38t-38 90v1280q0 52 38 90t90 38h128v96q0 66 47 113t113 47h64q66 0 113 -47t47 -113v-96h384v96q0 66 47 113t113 47h64q66 0 113 -47t47 -113v-96h128q52 0 90 -38t38 -90z"/></svg>
<svg class="b" style="left:1031.9px;top:1129.7px" width="16.2" height="16.2" viewBox="110 -1170 1188 1188" preserveAspectRatio="none"><path transform="scale(1,-1)" fill="#5e5e5e" d="M1298 214q0 -40 -28 -68l-136 -136q-28 -28 -68 -28t-68 28l-294 294l-294 -294q-28 -28 -68 -28t-68 28l-136 136q-28 28 -28 68t28 68l294 294l-294 294q-28 28 -28 68t28 68l136 136q28 28 68 28t68 -28l294 -294l294 294q28 28 68 28t68 -28l136 -136q28 -28 28 -68t-28 -68l-294 -294l294 -294q28 -28 28 -68z"/></svg>
<div class="b" style="left:1076px;top:1112px;width:334px;height:50px;background:#fff;border:1px solid #bcc5c6;border-radius:4px;"></div>
<div class="b" style="left:1077px;top:1113px;width:56.5px;height:48px;background:#eeeeee;border-right:1px solid #bcc5c6;border-radius:3px 0 0 3px;"></div>
<div class="b" style="left:1353px;top:1113px;width:56px;height:48px;background:#eeeeee;border-left:1px solid #bcc5c6;border-radius:0 3px 3px 0;"></div>
<svg class="b" style="left:1094.6px;top:1125.7px" width="19.5" height="21" viewBox="0 -1536 1664 1792" preserveAspectRatio="none"><path transform="scale(1,-1)" fill="#1d2323" d="M128 -128h288v288h-288v-288zM480 -128h320v288h-320v-288zM128 224h288v320h-288v-320zM480 224h320v320h-320v-320zM128 608h288v288h-288v-288zM864 -128h320v288h-320v-288zM480 608h320v288h-320v-288zM1248 -128h288v288h-288v-288zM864 224h320v320h-320v-320zM512 1088v288q0 13 -9.5 22.5t-22.5 9.5h-64q-13 0 -22.5 -9.5t-9.5 -22.5v-288q0 -13 9.5 -22.5t22.5 -9.5h64q13 0 22.5 9.5t9.5 22.5zM1248 224h288v320h-288v-320zM864 608h320v288h-320v-288zM1248 608h288v288h-288v-288zM1280 1088v288q0 13 -9.5 22.5t-22.5 9.5h-64q-13 0 -22.5 -9.5t-9.5 -22.5v-288q0 -13 9.5 -22.5t22.5 -9.5h64q13 0 22.5 9.5t9.5 22.5zM1664 1152v-1280q0 -52 -38 -90t-90 -38h-1408q-52 0 -90 38t-38 90v1280q0 52 38 90t90 38h128v96q0 66 47 113t113 47h64q66 0 113 -47t47 -113v-96h384v96q0 66 47 113t113 47h64q66 0 113 -47t47 -113v-96h128q52 0 90 -38t38 -90z"/></svg>
<svg class="b" style="left:1372.9px;top:1129.7px" width="16.2" height="16.2" viewBox="110 -1170 1188 1188" preserveAspectRatio="none"><path transform="scale(1,-1)" fill="#5e5e5e" d="M1298 214q0 -40 -28 -68l-136 -136q-28 -28 -68 -28t-68 28l-294 294l-294 -294q-28 -28 -68 -28t-68 28l-136 136q-28 28 -28 68t28 68l294 294l-294 294q-28 28 -28 68t28 68l136 136q28 28 68 28t68 -28l294 -294l294 294q28 28 68 28t68 -28l136 -136q28 -28 28 -68t-28 -68l-294 -294l294 -294q28 -28 28 -68z"/></svg>
<div class="b" style="left:1417px;top:1112px;width:334px;height:50px;background:#fff;border:1px solid #bcc5c6;border-radius:4px;"></div>
<div class="b" style="left:1418px;top:1113px;width:56.5px;height:48px;background:#eeeeee;border-right:1px solid #bcc5c6;border-radius:3px 0 0 3px;"></div>
<div class="b" style="left:1694px;top:1113px;width:56px;height:48px;background:#eeeeee;border-left:1px solid #bcc5c6;border-radius:0 3px 3px 0;"></div>
<svg class="b" style="left:1435.6px;top:1125.7px" width="19.5" height="21" viewBox="0 -1536 1664 1792" preserveAspectRatio="none"><path transform="scale(1,-1)" fill="#1d2323" d="M128 -128h288v288h-288v-288zM480 -128h320v288h-320v-288zM128 224h288v320h-288v-320zM480 224h320v320h-320v-320zM128 608h288v288h-288v-288zM864 -128h320v288h-320v-288zM480 608h320v288h-320v-288zM1248 -128h288v288h-288v-288zM864 224h320v320h-320v-320zM512 1088v288q0 13 -9.5 22.5t-22.5 9.5h-64q-13 0 -22.5 -9.5t-9.5 -22.5v-288q0 -13 9.5 -22.5t22.5 -9.5h64q13 0 22.5 9.5t9.5 22.5zM1248 224h288v320h-288v-320zM864 608h320v288h-320v-288zM1248 608h288v288h-288v-288zM1280 1088v288q0 13 -9.5 22.5t-22.5 9.5h-64q-13 0 -22.5 -9.5t-9.5 -22.5v-288q0 -13 9.5 -22.5t22.5 -9.5h64q13 0 22.5 9.5t9.5 22.5zM1664 1152v-1280q0 -52 -38 -90t-90 -38h-1408q-52 0 -90 38t-38 90v1280q0 52 38 90t90 38h128v96q0 66 47 113t113 47h64q66 0 113 -47t47 -113v-96h384v96q0 66 47 113t113 47h64q66 0 113 -47t47 -113v-96h128q52 0 90 -38t38 -90z"/></svg>
<svg class="b" style="left:1713.9px;top:1129.7px" width="16.2" height="16.2" viewBox="110 -1170 1188 1188" preserveAspectRatio="none"><path transform="scale(1,-1)" fill="#5e5e5e" d="M1298 214q0 -40 -28 -68l-136 -136q-28 -28 -68 -28t-68 28l-294 294l-294 -294q-28 -28 -68 -28t-68 28l-136 136q-28 28 -28 68t28 68l294 294l-294 294q-28 28 -28 68t28 68l136 136q28 28 68 28t68 -28l294 -294l294 294q28 28 68 28t68 -28l136 -136q28 -28 28 -68t-28 -68l-294 -294l294 -294q28 -28 28 -68z"/></svg>
<div class="b" style="left:1758px;top:1112px;width:333px;height:50px;background:#eeeeee;border:1px solid #bcc5c6;border-radius:4px;"></div>
<div class="b" style="left:1759px;top:1113px;width:56.5px;height:48px;background:#eeeeee;border-right:1px solid #bcc5c6;border-radius:3px 0 0 3px;"></div>
<div class="b" style="left:2034px;top:1113px;width:56px;height:48px;background:#eeeeee;border-left:1px solid #bcc5c6;border-radius:0 3px 3px 0;"></div>
<svg class="b" style="left:1776.6px;top:1125.7px" width="19.5" height="21" viewBox="0 -1536 1664 1792" preserveAspectRatio="none"><path transform="scale(1,-1)" fill="#1d2323" d="M128 -128h288v288h-288v-288zM480 -128h320v288h-320v-288zM128 224h288v320h-288v-320zM480 224h320v320h-320v-320zM128 608h288v288h-288v-288zM864 -128h320v288h-320v-288zM480 608h320v288h-320v-288zM1248 -128h288v288h-288v-288zM864 224h320v320h-320v-320zM512 1088v288q0 13 -9.5 22.5t-22.5 9.5h-64q-13 0 -22.5 -9.5t-9.5 -22.5v-288q0 -13 9.5 -22.5t22.5 -9.5h64q13 0 22.5 9.5t9.5 22.5zM1248 224h288v320h-288v-320zM864 608h320v288h-320v-288zM1248 608h288v288h-288v-288zM1280 1088v288q0 13 -9.5 22.5t-22.5 9.5h-64q-13 0 -22.5 -9.5t-9.5 -22.5v-288q0 -13 9.5 -22.5t22.5 -9.5h64q13 0 22.5 9.5t9.5 22.5zM1664 1152v-1280q0 -52 -38 -90t-90 -38h-1408q-52 0 -90 38t-38 90v1280q0 52 38 90t90 38h128v96q0 66 47 113t113 47h64q66 0 113 -47t47 -113v-96h384v96q0 66 47 113t113 47h64q66 0 113 -47t47 -113v-96h128q52 0 90 -38t38 -90z"/></svg>
<svg class="b" style="left:2053.9px;top:1129.7px" width="16.2" height="16.2" viewBox="110 -1170 1188 1188" preserveAspectRatio="none"><path transform="scale(1,-1)" fill="#5e5e5e" d="M1298 214q0 -40 -28 -68l-136 -136q-28 -28 -68 -28t-68 28l-294 294l-294 -294q-28 -28 -68 -28t-68 28l-136 136q-28 28 -28 68t28 68l294 294l-294 294q-28 28 -28 68t28 68l136 136q28 28 68 28t68 -28l294 -294l294 294q28 28 68 28t68 -28l136 -136q28 -28 28 -68t-28 -68l-294 -294l294 -294q28 -28 28 -68z"/></svg>
<div class="b" style="left:2098px;top:1112px;width:334px;height:50px;background:#fff;border:1px solid #bcc5c6;border-radius:4px;"></div>
<div class="b" style="left:2099px;top:1113px;width:56.5px;height:48px;background:#eeeeee;border-right:1px solid #bcc5c6;border-radius:3px 0 0 3px;"></div>
<div class="b" style="left:2375px;top:1113px;width:56px;height:48px;background:#eeeeee;border-left:1px solid #bcc5c6;border-radius:0 3px 3px 0;"></div>
<svg class="b" style="left:2116.6px;top:1125.7px" width="19.5" height="21" viewBox="0 -1536 1664 1792" preserveAspectRatio="none"><path transform="scale(1,-1)" fill="#1d2323" d="M128 -128h288v288h-288v-288zM480 -128h320v288h-320v-288zM128 224h288v320h-288v-320zM480 224h320v320h-320v-320zM128 608h288v288h-288v-288zM864 -128h320v288h-320v-288zM480 608h320v288h-320v-288zM1248 -128h288v288h-288v-288zM864 224h320v320h-320v-320zM512 1088v288q0 13 -9.5 22.5t-22.5 9.5h-64q-13 0 -22.5 -9.5t-9.5 -22.5v-288q0 -13 9.5 -22.5t22.5 -9.5h64q13 0 22.5 9.5t9.5 22.5zM1248 224h288v320h-288v-320zM864 608h320v288h-320v-288zM1248 608h288v288h-288v-288zM1280 1088v288q0 13 -9.5 22.5t-22.5 9.5h-64q-13 0 -22.5 -9.5t-9.5 -22.5v-288q0 -13 9.5 -22.5t22.5 -9.5h64q13 0 22.5 9.5t9.5 22.5zM1664 1152v-1280q0 -52 -38 -90t-90 -38h-1408q-52 0 -90 38t-38 90v1280q0 52 38 90t90 38h128v96q0 66 47 113t113 47h64q66 0 113 -47t47 -113v-96h384v96q0 66 47 113t113 47h64q66 0 113 -47t47 -113v-96h128q52 0 90 -38t38 -90z"/></svg>
<svg class="b" style="left:2394.9px;top:1129.7px" width="16.2" height="16.2" viewBox="110 -1170 1188 1188" preserveAspectRatio="none"><path transform="scale(1,-1)" fill="#5e5e5e" d="M1298 214q0 -40 -28 -68l-136 -136q-28 -28 -68 -28t-68 28l-294 294l-294 -294q-28 -28 -68 -28t-68 28l-136 136q-28 28 -28 68t28 68l294 294l-294 294q-28 28 -28 68t28 68l136 136q28 28 68 28t68 -28l294 -294l294 294q28 28 68 28t68 -28l136 -136q28 -28 28 -68t-28 -68l-294 -294l294 -294q28 -28 28 -68z"/></svg>
<span class="t" style="left:419px;top:1127px;font-size:20.3px;transform:translateX(0.72px) scaleX(0.981);color:#1d2323;">Component Pending</span>
<span class="t" style="left:1834px;top:1127px;font-size:20.3px;transform:scaleX(0.9268);color:#1d2323;">01-02-2023</span>
<div class="b" style="left:50px;top:1192px;width:2386px;height:1px;background:#dfe2e5;"></div>
<div class="b" style="left:50px;top:1247px;width:2386px;height:1px;background:#dfe2e5;"></div>
<div class="b" style="left:50px;top:1248px;width:2386px;height:73px;background:#f8f9fd;"></div>
<div class="b" style="left:50px;top:1321px;width:2386px;height:1px;background:#dfe2e5;"></div>
<div class="b" style="left:50px;top:1396px;width:2386px;height:1px;background:#dfe2e5;"></div>
<div class="b" style="left:50px;top:1397px;width:2386px;height:23px;background:#f8f9fd;"></div>
<span class="t" style="left:62px;top:1210px;font-size:20.3px;letter-spacing:0.91px;transform:translateX(0.78px) scaleX(0.9018);-webkit-text-stroke:0.73px #111;color:#111;">Size</span>
<span class="t" style="left:141px;top:1210px;font-size:20.3px;letter-spacing:0.91px;transform:translateX(0.66px) scaleX(0.9906);-webkit-text-stroke:0.73px #111;color:#111;">Product Id</span>
<span class="t" style="left:509px;top:1210px;font-size:20.3px;letter-spacing:0.91px;transform:translateX(0.23px) scaleX(1.0052);-webkit-text-stroke:0.73px #111;color:#111;">Description</span>
<span class="t" style="left:753px;top:1210px;font-size:20.3px;letter-spacing:0.91px;transform:translateX(0.74px) scaleX(0.9978);-webkit-text-stroke:0.73px #111;color:#111;">Brand</span>
<span class="t" style="left:856px;top:1210px;font-size:20.3px;letter-spacing:0.91px;transform:translateX(0.36px) scaleX(1.0007);-webkit-text-stroke:0.73px #111;color:#111;">Units</span>
<span class="t" style="left:1183px;top:1210px;font-size:20.3px;letter-spacing:0.91px;transform:translateX(0.87px) scaleX(0.9243);-webkit-text-stroke:0.73px #111;color:#111;">AMD Units</span>
<span class="t" style="left:1510px;top:1210px;font-size:20.3px;letter-spacing:0.91px;transform:translateX(0.58px) scaleX(0.8949);-webkit-text-stroke:0.73px #111;color:#111;">QTY to Cut</span>
<span class="t" style="left:1836px;top:1210px;font-size:20.3px;letter-spacing:0.91px;transform:translateX(0.92px) scaleX(0.9625);-webkit-text-stroke:0.73px #111;color:#111;">Unit Cost</span>
<span class="t" style="left:1977px;top:1210px;font-size:20.3px;letter-spacing:0.91px;transform:translateX(0.9px) scaleX(0.9611);-webkit-text-stroke:0.73px #111;color:#111;">Currency</span>
<span class="t" style="left:2116px;top:1210px;font-size:20.3px;letter-spacing:0.91px;transform:translateX(0.39px) scaleX(0.9053);-webkit-text-stroke:0.73px #111;color:#111;">FOB Date</span>
<span class="t" style="left:2256px;top:1210px;font-size:20.3px;letter-spacing:0.91px;transform:translateX(0.3px) scaleX(0.965);-webkit-text-stroke:0.73px #111;color:#111;">Delivery Date</span>
<span class="t" style="left:62px;top:1265px;font-size:20.3px;transform:translateX(0.95px) scaleX(0.8623);color:#1d2323;">8</span>
<span class="t" style="left:509px;top:1265px;font-size:20.3px;letter-spacing:0.6px;transform:translateX(0.65px) scaleX(0.9526);color:#1d2323;">Ditsy Print Viscose</span>
<span class="t" style="left:1837px;top:1265px;font-size:20.3px;transform:translateX(0.87px) scaleX(0.9439);color:#1d2323;">9.4</span>
<span class="t" style="left:1978px;top:1265px;font-size:20.3px;transform:translateX(0.3px) scaleX(0.9014);color:#1d2323;">GBP</span>
<span class="t" style="left:2257px;top:1265px;font-size:20.3px;transform:translateX(0.46px) scaleX(0.9806);color:#1d2323;">01-02-2023</span>
<div class="b" style="left:141px;top:1260px;width:312px;height:50px;background:#eeeeee;border:1px solid #bcc5c6;border-radius:4px;"></div>
<div class="b" style="left:857px;top:1260px;width:302px;height:49px;background:#eeeeee;border:1px solid #bcc5c6;border-radius:4px;"></div>
<div class="b" style="left:1183px;top:1260px;width:303px;height:49px;background:#eeeeee;border:1px solid #bcc5c6;border-radius:4px;"></div>
<div class="b" style="left:1510px;top:1260px;width:303px;height:49px;background:#eeeeee;border:1px solid #bcc5c6;border-radius:4px;"></div>
<span class="t" style="left:161px;top:1275px;font-size:20.3px;transform:translateX(0.06px) scaleX(0.8513);color:#333;">0</span>
<span class="t" style="left:875px;top:1275px;font-size:20.3px;transform:translateX(0.52px) scaleX(0.9026);color:#333;">0</span>
<span class="t" style="left:1528px;top:1275px;font-size:20.3px;transform:translateX(0.81px) scaleX(0.9231);color:#333;">0</span>
<span class="t" style="left:62px;top:1339px;font-size:20.3px;transform:translateX(0.31px) scaleX(0.9266);color:#1d2323;">10</span>
<span class="t" style="left:509px;top:1339px;font-size:20.3px;letter-spacing:0.6px;transform:translateX(0.65px) scaleX(0.9526);color:#1d2323;">Ditsy Print Viscose</span>
<span class="t" style="left:1837px;top:1339px;font-size:20.3px;transform:translateX(0.87px) scaleX(0.9439);color:#1d2323;">9.4</span>
<span class="t" style="left:1978px;top:1339px;font-size:20.3px;transform:translateX(0.3px) scaleX(0.9014);color:#1d2323;">GBP</span>
<span class="t" style="left:2257px;top:1339px;font-size:20.3px;transform:translateX(0.46px) scaleX(0.9806);color:#1d2323;">01-02-2023</span>
<div class="b" style="left:141px;top:1335px;width:312px;height:49px;background:#eeeeee;border:1px solid #bcc5c6;border-radius:4px;"></div>
<div class="b" style="left:857px;top:1334px;width:302px;height:50px;background:#eeeeee;border:1px solid #bcc5c6;border-radius:4px;"></div>
<div class="b" style="left:1183px;top:1334px;width:303px;height:50px;background:#eeeeee;border:1px solid #bcc5c6;border-radius:4px;"></div>
<div class="b" style="left:1510px;top:1334px;width:303px;height:50px;background:#eeeeee;border:1px solid #bcc5c6;border-radius:4px;"></div>
<span class="t" style="left:160px;top:1350px;font-size:20.3px;transform:translateX(0.31px) scaleX(0.9279);color:#333;">123</span>
<span class="t" style="left:874px;top:1349px;font-size:20.3px;transform:translateX(0.77px) scaleX(0.9513);color:#333;">10</span>
<span class="t" style="left:1528px;top:1349px;font-size:20.3px;transform:translateX(0.81px) scaleX(0.9231);color:#333;">0</span>
<span class="t" style="left:62px;top:1414px;font-size:20.3px;transform:translateX(0.3px) scaleX(0.9324);color:#1d2323;">12</span>
<span class="t" style="left:509px;top:1414px;font-size:20.3px;letter-spacing:0.6px;transform:translateX(0.65px) scaleX(0.9526);color:#1d2323;">Ditsy Print Viscose</span>
<span class="t" style="left:1837px;top:1414px;font-size:20.3px;transform:translateX(0.87px) scaleX(0.9439);color:#1d2323;">9.4</span>
<span class="t" style="left:1978px;top:1414px;font-size:20.3px;transform:translateX(0.3px) scaleX(0.9014);color:#1d2323;">GBP</span>
<span class="t" style="left:2257px;top:1414px;font-size:20.3px;transform:translateX(0.46px) scaleX(0.9806);color:#1d2323;">01-02-2023</span>
<div class="b" style="left:141px;top:1409px;width:312px;height:49px;background:#eeeeee;border:1px solid #bcc5c6;border-radius:4px;"></div>
<div class="b" style="left:857px;top:1409px;width:302px;height:49px;background:#eeeeee;border:1px solid #bcc5c6;border-radius:4px;"></div>
<div class="b" style="left:1183px;top:1409px;width:303px;height:49px;background:#eeeeee;border:1px solid #bcc5c6;border-radius:4px;"></div>
<div class="b" style="left:1510px;top:1409px;width:303px;height:49px;background:#eeeeee;border:1px solid #bcc5c6;border-radius:4px;"></div>
<div class="b" style="left:129px;top:1321px;width:368px;height:1px;background:#f8f9fd;"></div>
<div class="b" style="left:129px;top:1322px;width:368px;height:1px;background:#dfe2e5;"></div>
<div class="b" style="left:2316px;top:1338px;width:163px;height:69px;background:#f15a2c;border-radius:35px;"></div>
<svg class="b" style="left:2347px;top:1356px" width="34" height="34" viewBox="0 0 34 34"><circle cx="16.8" cy="16.6" r="13" fill="none" stroke="#2e1b13" stroke-width="3.4"/></svg>
<span class="t" style="left:2358px;top:1362px;font-size:21px;letter-spacing:0.94px;transform:translateX(0.03px) scaleX(0.9395);-webkit-text-stroke:0.5px #2e1b13;color:#2e1b13;font-weight:700;">?</span>
<span class="t" style="left:2391px;top:1361px;font-size:25.5px;letter-spacing:0.6px;transform:translateX(0.32px) scaleX(0.9416);-webkit-text-stroke:0.7px #2e1b13;color:#2e1b13;font-weight:700;">Help</span>
</div>
</body></html>
